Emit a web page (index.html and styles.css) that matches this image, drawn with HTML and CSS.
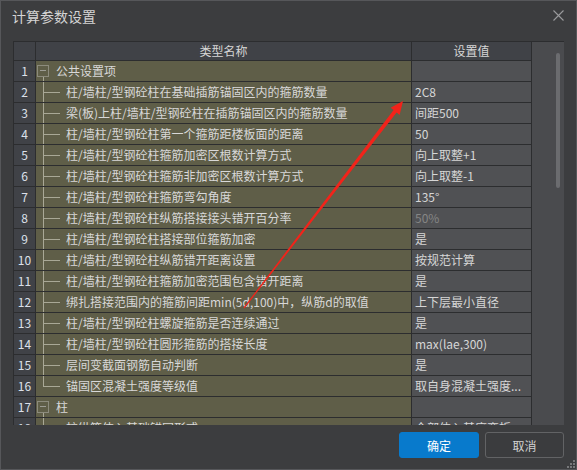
FILE: index.html
```html
<!DOCTYPE html>
<html lang="zh-CN">
<head>
<meta charset="utf-8">
<title>计算参数设置</title>
<link rel="stylesheet" href="styles.css">
</head>
<body>
<div class="dialog">
  <div class="titlebar">
    <span class="title">计算参数设置</span>
    <svg class="close" width="11" height="11" viewBox="0 0 11 11"><path d="M0.5 0.5L10.5 10.5M10.5 0.5L0.5 10.5" stroke="#9a9b9d" stroke-width="1.1" fill="none"/></svg>
  </div>
  <div class="table-wrap">
    <div class="grid">
      <div class="c h"></div><div class="c h">类型名称</div><div class="c h">设置值</div>

      <div class="c num">1</div><div class="c type"><span class="tree parent"><span class="box"></span></span><span class="ptext">公共设置项</span></div><div class="c val"></div>
      <div class="c num">2</div><div class="c type"><span class="tree child"></span><span class="ctext">柱/墙柱/型钢砼柱在基础插筋锚固区内的箍筋数量</span></div><div class="c val">2C8</div>
      <div class="c num">3</div><div class="c type"><span class="tree child"></span><span class="ctext">梁(板)上柱/墙柱/型钢砼柱在插筋锚固区内的箍筋数量</span></div><div class="c val">间距500</div>
      <div class="c num">4</div><div class="c type"><span class="tree child"></span><span class="ctext">柱/墙柱/型钢砼柱第一个箍筋距楼板面的距离</span></div><div class="c val">50</div>
      <div class="c num">5</div><div class="c type"><span class="tree child"></span><span class="ctext">柱/墙柱/型钢砼柱箍筋加密区根数计算方式</span></div><div class="c val">向上取整+1</div>
      <div class="c num">6</div><div class="c type"><span class="tree child"></span><span class="ctext">柱/墙柱/型钢砼柱箍筋非加密区根数计算方式</span></div><div class="c val">向上取整-1</div>
      <div class="c num">7</div><div class="c type"><span class="tree child"></span><span class="ctext">柱/墙柱/型钢砼柱箍筋弯勾角度</span></div><div class="c val">135°</div>
      <div class="c num">8</div><div class="c type"><span class="tree child"></span><span class="ctext">柱/墙柱/型钢砼柱纵筋搭接接头错开百分率</span></div><div class="c val muted">50%</div>
      <div class="c num">9</div><div class="c type"><span class="tree child"></span><span class="ctext">柱/墙柱/型钢砼柱搭接部位箍筋加密</span></div><div class="c val">是</div>
      <div class="c num">10</div><div class="c type"><span class="tree child"></span><span class="ctext">柱/墙柱/型钢砼柱纵筋错开距离设置</span></div><div class="c val">按规范计算</div>
      <div class="c num">11</div><div class="c type"><span class="tree child"></span><span class="ctext">柱/墙柱/型钢砼柱箍筋加密范围包含错开距离</span></div><div class="c val">是</div>
      <div class="c num">12</div><div class="c type"><span class="tree child"></span><span class="ctext">绑扎搭接范围内的箍筋间距min(5d,100)中，纵筋d的取值</span></div><div class="c val">上下层最小直径</div>
      <div class="c num">13</div><div class="c type"><span class="tree child"></span><span class="ctext">柱/墙柱/型钢砼柱螺旋箍筋是否连续通过</span></div><div class="c val">是</div>
      <div class="c num">14</div><div class="c type"><span class="tree child"></span><span class="ctext">柱/墙柱/型钢砼柱圆形箍筋的搭接长度</span></div><div class="c val">max(lae,300)</div>
      <div class="c num">15</div><div class="c type"><span class="tree child"></span><span class="ctext">层间变截面钢筋自动判断</span></div><div class="c val">是</div>
      <div class="c num">16</div><div class="c type"><span class="tree child last"></span><span class="ctext">锚固区混凝土强度等级值</span></div><div class="c val">取自身混凝土强度...</div>
      <div class="c num">17</div><div class="c type"><span class="tree parent"><span class="box"></span></span><span class="ptext">柱</span></div><div class="c val"></div>
      <div class="c num">18</div><div class="c type"><span class="tree child"></span><span class="ctext">柱纵筋伸入基础锚固形式</span></div><div class="c val">全部伸入基底弯折</div>
    </div>
    <div class="scroll"><div class="thumb"></div></div>
  </div>
  <div class="footer">
    <button class="btn primary">确定</button>
    <button class="btn secondary">取消</button>
  </div>
  <svg class="grip" width="9" height="9" viewBox="0 0 9 9"><g fill="#77787a"><rect x="7" y="1" width="2" height="2"/><rect x="4" y="4" width="2" height="2"/><rect x="7" y="4" width="2" height="2"/><rect x="1" y="7" width="2" height="2"/><rect x="4" y="7" width="2" height="2"/><rect x="7" y="7" width="2" height="2"/></g></svg>
  <svg class="arrow" width="577" height="470" viewBox="0 0 577 470"><polygon points="244.4,308.4 396.6,112.5 399.6,114.9 403,101 390.6,107.8 393.6,110.1 243.6,307.6" fill="#f2231a"/></svg>
</div>
</body>
</html>
```

FILE: styles.css
```css
html, body {
  margin: 0;
  padding: 0;
  background: #3c3d3f;
}
body {
  font-family: "Noto Sans CJK SC", "Microsoft YaHei", "Noto Sans", sans-serif;
  font-size: 12px;
  color: #d6d6d6;
}
.dialog {
  position: relative;
  width: 577px;
  height: 470px;
  box-sizing: border-box;
  border: 1px solid #56575a;
  background: #3c3d3f;
  display: flex;
  flex-direction: column;
  overflow: hidden;
}
.titlebar {
  height: 40px;
  box-sizing: border-box;
  padding: 5px 12px 0 11px;
  display: flex;
  justify-content: space-between;
  align-items: flex-start;
  flex: none;
}
.title {
  font-size: 14px;
  line-height: 20px;
  color: #d4d4d4;
}
.close {
  margin-top: 4px;
  display: block;
}
.table-wrap {
  margin: 0 12px;
  height: 384px;
  display: flex;
  overflow: hidden;
  flex: none;
}
.grid {
  display: grid;
  grid-template-columns: 21px 375px 119px;
  grid-template-rows: 18px;
  grid-auto-rows: 20px;
  gap: 1px;
  padding: 1px;
  background: #2c2d2f;
  align-self: flex-start;
  flex: none;
}
.c {
  display: flex;
  align-items: center;
  white-space: nowrap;
  overflow: hidden;
  line-height: 20px;
}
.h {
  background: #404247;
  justify-content: center;
  color: #d6d6d6;
}
.num {
  background: #404247;
  justify-content: center;
  color: #dce0ea;
}
.type {
  background: #5f5e48;
}
.val {
  background: #505154;
  padding-left: 3px;
}
.muted {
  color: #858585;
}
.tree {
  flex: none;
  height: 100%;
}
.tree.child {
  width: 24px;
  background:
    linear-gradient(#a9a896, #a9a896) 7px 0 / 1px 100% no-repeat,
    linear-gradient(#a9a896, #a9a896) 8px 10px / 16px 1px no-repeat;
}
.tree.child.last {
  background:
    linear-gradient(#a9a896, #a9a896) 7px 0 / 1px 11px no-repeat,
    linear-gradient(#a9a896, #a9a896) 8px 10px / 16px 1px no-repeat;
}
.tree.parent {
  width: 20px;
  display: flex;
  align-items: center;
  background: linear-gradient(#a9a896, #a9a896) 7px 16px / 1px 4px no-repeat;
}
.box {
  width: 12px;
  height: 12px;
  margin-left: 1px;
  margin-top: -1px;
  box-sizing: border-box;
  border: 1px solid #8c8b7d;
  background: linear-gradient(#9c9c94, #9c9c94) center / 6px 1px no-repeat;
}
.ctext {
  margin-left: 6px;
  color: #d8d8d8;
}
.ptext {
  color: #d8d8d8;
}
.scroll {
  width: 32px;
  flex: none;
  box-sizing: border-box;
  background: #4a4b4e;
  border-top: 1px solid #2c2d2f;
  padding: 11px 0 0 24px;
}
.thumb {
  width: 4px;
  height: 135px;
  border-radius: 2px;
  background: #6b6c6f;
}
.footer {
  margin-top: 7px;
  padding-right: 12px;
  display: flex;
  justify-content: flex-end;
  gap: 6px;
  flex: none;
}
.btn {
  height: 26px;
  box-sizing: border-box;
  border-radius: 3px;
  font-family: "Noto Sans CJK SC", "Microsoft YaHei", sans-serif;
  font-size: 12px;
  padding: 0;
  cursor: pointer;
}
.btn.primary {
  width: 80px;
  background: #087acc;
  border: 1px solid #087acc;
  color: #ffffff;
}
.btn.secondary {
  width: 79px;
  background: #3b3c3e;
  border: 1px solid #626365;
  color: #d2d2d2;
}
.grip {
  position: absolute;
  right: 1px;
  bottom: 1px;
}
.arrow {
  position: absolute;
  left: -1px;
  top: -1px;
  pointer-events: none;
}
```
